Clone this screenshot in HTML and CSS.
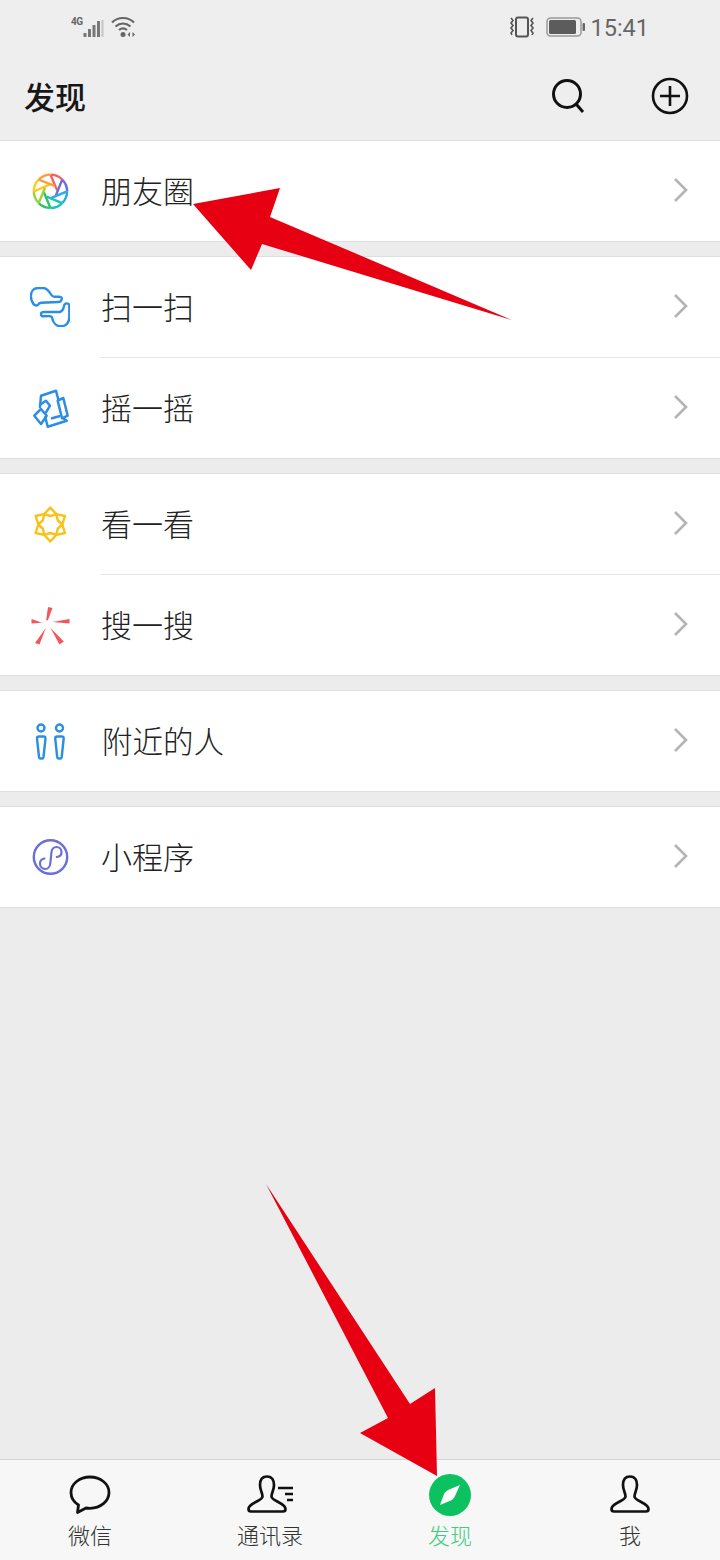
FILE: index.html
```html
<!DOCTYPE html>
<html lang="zh-CN">
<head>
<meta charset="utf-8">
<title>发现</title>
<link rel="stylesheet" href="styles.css">
</head>
<body>
<div class="app">
  <div class="status">
    <div class="status-left">
      <span class="net">4G</span>
      <svg class="signal" width="22" height="24" viewBox="0 0 22 24"><g fill="#777"><rect x="0.500" y="18" width="3" height="4"/><rect x="5" y="14" width="3" height="8"/><rect x="9.500" y="10" width="3" height="12"/><rect x="14" y="6" width="3" height="16"/></g><rect x="18.500" y="5" width="2" height="17" fill="#c4c4c4"/></svg>
      <svg class="wifi" width="26" height="24" viewBox="0 0 26 24"><g fill="none" stroke="#666" stroke-width="2.200"><path d="M1 7.500C7 1.500 17 1.500 23 7.500"/><path d="M4.500 11.500C9 7.500 15 7.500 19.500 11.500"/><path d="M8 15C10.500 13 13.500 13 16 15"/></g><circle cx="12" cy="19.500" r="2.500" fill="#666"/><path d="M19 17v5l-2.500-2.500zM21.500 17v5l2.500-2.500z" fill="#666"/></svg>
    </div>
    <div class="status-right">
      <svg class="vib" width="28" height="24" viewBox="0 0 28 24"><rect x="8" y="2.500" width="12" height="19" rx="2" fill="none" stroke="#555" stroke-width="2"/><g fill="none" stroke="#555" stroke-width="1.600"><path d="M3 3l2 2.500-2 2.500 2 2.500-2 2.500 2 2.500-2 2.500 1 2"/><path d="M25 3l-2 2.500 2 2.500-2 2.500 2 2.500-2 2.500 2 2.500-1 2"/></g></svg>
      <svg class="batt" width="40" height="22" viewBox="0 0 40 22"><rect x="1" y="2" width="34" height="18" rx="3.500" fill="none" stroke="#999" stroke-width="1.500"/><rect x="3" y="4" width="27" height="14" rx="1.500" fill="#5c5c5c"/><rect x="36.500" y="7" width="2.500" height="8" rx="1" fill="#666"/></svg>
      <span class="time">15:41</span>
    </div>
  </div>

  <header class="topbar">
    <h1 class="title">发现</h1>
    <svg class="top-search" width="36" height="38" viewBox="0 0 36 38"><circle cx="16" cy="17" r="13.500" fill="none" stroke="#111" stroke-width="3"/><path d="M25.500 27.500L32 35" stroke="#111" stroke-width="3" fill="none"/></svg>
    <svg class="top-plus" width="38" height="38" viewBox="0 0 38 38"><circle cx="19" cy="19" r="17" fill="none" stroke="#111" stroke-width="2.600"/><path d="M19 9v20M9 19h20" stroke="#111" stroke-width="2.600" fill="none"/></svg>
  </header>

  <main class="list">
    <section class="group first">
      <div class="row">
        <svg class="icon" width="40" height="40" viewBox="0 0 40 40">
          <g fill="none" stroke-width="2.500" transform="translate(20.500 20.300) scale(.95) translate(-20 -20)">
            <g stroke="#f4645f"><path d="M20 2.500A17.500 17.500 0 0 1 32.400 7.600M20 2.500L27 19"/></g>
            <g stroke="#6f6be0" transform="rotate(45 20 20)"><path d="M20 2.500A17.500 17.500 0 0 1 32.400 7.600M20 2.500L27 19"/></g>
            <g stroke="#2ba8ee" transform="rotate(90 20 20)"><path d="M20 2.500A17.500 17.500 0 0 1 32.400 7.600M20 2.500L27 19"/></g>
            <g stroke="#18c3c0" transform="rotate(135 20 20)"><path d="M20 2.500A17.500 17.500 0 0 1 32.400 7.600M20 2.500L27 19"/></g>
            <g stroke="#2cc36b" transform="rotate(180 20 20)"><path d="M20 2.500A17.500 17.500 0 0 1 32.400 7.600M20 2.500L27 19"/></g>
            <g stroke="#9ed13a" transform="rotate(225 20 20)"><path d="M20 2.500A17.500 17.500 0 0 1 32.400 7.600M20 2.500L27 19"/></g>
            <g stroke="#f8cd20" transform="rotate(270 20 20)"><path d="M20 2.500A17.500 17.500 0 0 1 32.400 7.600M20 2.500L27 19"/></g>
            <g stroke="#f9a03c" transform="rotate(315 20 20)"><path d="M20 2.500A17.500 17.500 0 0 1 32.400 7.600M20 2.500L27 19"/></g>
          </g>
        </svg>
        <span class="label">朋友圈</span>
        <svg class="chev" width="16" height="26" viewBox="0 0 16 26"><path d="M2 2l11 11L2 24" fill="none" stroke="#b4b4b4" stroke-width="2.600"/></svg>
      </div>
    </section>

    <section class="group">
      <div class="row">
        <svg class="icon" width="40" height="40" viewBox="0 0 40 40"><g fill="none" stroke="#2a8ee6" stroke-width="2.400" stroke-linejoin="round" stroke-linecap="round"><path d="M3.500 17C1.500 14 .7 11 .9 8.500C1.200 4 4 1 8 1H13C17 1 19 4 21 7.500C22 9.300 23 9.700 24.500 9.700H28.500C31 9.700 32.500 10.500 31.500 12.800C31 14.300 30 15 28.500 15L11 15.700C9.500 15.800 8.500 16.800 7.800 18C7 19 4.500 18.500 3.500 17Z"/><path d="M13.300 29.300C10.500 29.300 10 25.500 13.300 25H29.500C32 24.500 33.500 22 34 19C34.500 15.500 39.300 15.500 39.300 19V30C39.300 35.500 36 39.300 31 39.300C26.500 39.300 23.300 36 22.500 32C22.200 30 21.500 29 19.500 29.100Z"/></g></svg>
        <span class="label">扫一扫</span>
        <svg class="chev" width="16" height="26" viewBox="0 0 16 26"><path d="M2 2l11 11L2 24" fill="none" stroke="#b4b4b4" stroke-width="2.600"/></svg>
      </div>
      <div class="divider"></div>
      <div class="row">
        <svg class="icon" width="40" height="40" viewBox="0 0 40 40"><g fill="none" stroke="#2a8ee6" stroke-width="2.500" stroke-linejoin="round" stroke-linecap="round"><path d="M10 19L11 7.700L26 2.700L28.300 11.500"/><path d="M27.700 12.700L33.300 10L37.700 27.700L32 30.300Z"/><path d="M33.500 30.500L36.700 32.700L17.700 38.700L15.300 29.300"/><path d="M4.300 27.700L11 21L16.700 27.700L11 36Z"/><path d="M11 16L16 12.700L20 17.700L16 24.300"/><path d="M22 30.300L29.300 28.300"/></g></svg>
        <span class="label">摇一摇</span>
        <svg class="chev" width="16" height="26" viewBox="0 0 16 26"><path d="M2 2l11 11L2 24" fill="none" stroke="#b4b4b4" stroke-width="2.600"/></svg>
      </div>
    </section>

    <section class="group">
      <div class="row">
        <svg class="icon" width="40" height="40" viewBox="-0.300 -0.500 40 40"><g fill="none" stroke="#f7c318" stroke-width="2.400" stroke-linejoin="round"><polygon points="20,3 26,9.600 34.700,11.500 32,20 34.700,28.500 26,30.400 20,37 14,30.400 5.300,28.500 8,20 5.300,11.500 14,9.600"/><polygon points="20,11.500 26,9.600 27.400,15.750 32,20 27.400,24.250 26,30.400 20,28.500 14,30.400 12.600,24.250 8,20 12.600,15.750 14,9.600"/></g></svg>
        <span class="label">看一看</span>
        <svg class="chev" width="16" height="26" viewBox="0 0 16 26"><path d="M2 2l11 11L2 24" fill="none" stroke="#b4b4b4" stroke-width="2.600"/></svg>
      </div>
      <div class="divider"></div>
      <div class="row">
        <svg class="icon" width="40" height="40" viewBox="0 -2 40 40"><g fill="#f4545a"><polygon points="18,0 22.500,1 17.800,13.500 16.200,13"/><polygon points="39.500,12 39.500,16.500 22.500,15"/><polygon points="1.500,12 1.500,16.500 12,15.800"/><polygon points="5,36 9.500,37.500 15.800,21"/><polygon points="29.500,37.500 33.800,34.500 20.500,21"/></g></svg>
        <span class="label">搜一搜</span>
        <svg class="chev" width="16" height="26" viewBox="0 0 16 26"><path d="M2 2l11 11L2 24" fill="none" stroke="#b4b4b4" stroke-width="2.600"/></svg>
      </div>
    </section>

    <section class="group">
      <div class="row">
        <svg class="icon" width="40" height="40" viewBox="0 0 40 40"><g fill="none" stroke="#2a8ee6" stroke-width="2.400" stroke-linejoin="round"><circle cx="11" cy="7" r="3.500"/><circle cx="29.500" cy="7" r="3.500"/><path d="M7 17.500Q7 15.500 9 15.500H13.500Q15.500 15.500 15.500 17.500L13.500 36Q13.300 37.500 12 37.500H10.500Q9.200 37.500 9 36Z"/><path d="M25.200 17.500Q25.200 15.500 27.200 15.500H31.700Q33.700 15.500 33.700 17.500L31.700 36Q31.500 37.500 30.200 37.500H28.700Q27.400 37.500 27.200 36Z"/></g></svg>
        <span class="label wide">附近的人</span>
        <svg class="chev" width="16" height="26" viewBox="0 0 16 26"><path d="M2 2l11 11L2 24" fill="none" stroke="#b4b4b4" stroke-width="2.600"/></svg>
      </div>
    </section>

    <section class="group">
      <div class="row">
        <svg class="icon" width="40" height="40" viewBox="0 0 40 40"><g fill="none" stroke="#6b6fdc"><circle cx="20.500" cy="20" r="16.700" stroke-width="2.400"/><path d="M14.500 21.500C11.500 22 10 24 10 26.500C10 30 12.500 32 15.200 32C18 32 20 29.500 20.300 26.500L21.500 15C21.800 12 24 10 26.500 10C29.500 10 31.500 12.500 31.500 15C31.500 17.800 29.500 19.800 26.800 20" stroke-width="2.200" stroke-linecap="round"/></g></svg>
        <span class="label">小程序</span>
        <svg class="chev" width="16" height="26" viewBox="0 0 16 26"><path d="M2 2l11 11L2 24" fill="none" stroke="#b4b4b4" stroke-width="2.600"/></svg>
      </div>
    </section>
  </main>

  <nav class="tabbar">
    <div class="tab">
      <svg class="tab-icon" width="44" height="42" viewBox="0 0 44 42"><path d="M22 3C11.500 3 3 9.800 3 18.500C3 24 6.500 28.500 10.500 31L9.500 38.500L18 34C19.500 34.200 21 34.300 22 34.300C32.500 34.300 41 27.300 41 18.500C41 9.800 32.500 3 22 3Z" fill="none" stroke="#111" stroke-width="2.800" stroke-linejoin="round"/></svg>
      <span class="tab-label">微信</span>
    </div>
    <div class="tab">
      <svg class="tab-icon" width="48" height="42" viewBox="0 0 48 42"><path d="M21 2.500C15.500 2.500 14 7 14 11C14 16 16.500 19 16.500 22.500C16.500 27 2.500 29 2.500 35Q2.500 37.500 5 37.500H37Q39.500 37.500 39.500 35C39.500 29 25.500 27 25.500 22.500C25.500 19 28 16 28 11C28 7 26.500 2.500 21 2.500Z" fill="none" stroke="#111" stroke-width="2.700" stroke-linejoin="round"/><path d="M32 14H47M39 20H47M41 26H47" stroke="#111" stroke-width="2.600" fill="none"/></svg>
      <span class="tab-label">通讯录</span>
    </div>
    <div class="tab active">
      <svg class="tab-icon" width="42" height="42" viewBox="0 0 42 42"><circle cx="21" cy="21" r="21" fill="#0bc160"/><path d="M31 11L19 16Q16 18 15 20L11 31L23 26Q25 24 26 22Z" fill="#fff"/></svg>
      <span class="tab-label">发现</span>
    </div>
    <div class="tab">
      <svg class="tab-icon" width="42" height="42" viewBox="0 0 42 42"><path d="M21 2.500C15.500 2.500 14 7 14 11C14 16 16.500 19 16.500 22.500C16.500 27 2.500 29 2.500 35Q2.500 37.500 5 37.500H37Q39.500 37.500 39.500 35C39.500 29 25.500 27 25.500 22.500C25.500 19 28 16 28 11C28 7 26.500 2.500 21 2.500Z" fill="none" stroke="#111" stroke-width="2.700" stroke-linejoin="round"/></svg>
      <span class="tab-label">我</span>
    </div>
  </nav>

  <svg class="arrows" width="720" height="1560" viewBox="0 0 720 1560"><polygon fill="#e60012" points="193,204 280,188 270,217 512,320 262,244 251,270"/><polygon fill="#e60012" points="437,1476 360,1433 388,1418 266,1184 410,1404 435,1388"/></svg>
</div>
</body>
</html>
```

FILE: styles.css
```css
* { box-sizing: border-box; }
html, body { margin: 0; padding: 0; }
body { font-family: "Noto Sans CJK SC", "Noto Sans", sans-serif; background: #ededed; }
.app { position: relative; width: 720px; height: 1560px; display: flex; flex-direction: column; background: #ececec; overflow: hidden; }

.status { height: 56px; flex: none; display: flex; justify-content: space-between; align-items: flex-start; background: #eeeeee; padding: 15px 71px 0 71px; }
.status-left, .status-right { display: flex; align-items: flex-start; }
.net { font-family: "Liberation Sans Narrow", "Roboto", sans-serif; font-size: 10px; font-weight: 700; color: #666; line-height: 12px; margin-top: 1px; width: 12px; letter-spacing: -0.5px; }
.signal { margin-right: 6px; }
.vib { margin-right: 10px; }
.batt { margin-right: 4px; margin-top: 1px; }
.time { font-family: Roboto, sans-serif; font-size: 23.500px; line-height: 26px; color: #666; }

.topbar { height: 84px; flex: none; display: flex; align-items: center; background: #eeeeee; padding: 0 31px 4px 24px; }
.title { flex: 1; margin: 0; font-size: 31px; line-height: 40px; font-weight: 500; color: #171717; }
.top-search { margin-right: 64px; }

.list { flex: 1; }
.group { background: #fff; border-top: 1px solid #dedede; border-bottom: 1px solid #dedede; margin-top: 14px; }
.group.first { margin-top: 0; }
.row { height: 100px; display: flex; align-items: center; padding: 0 31px 0 30px; }
.icon { flex: none; margin-right: 31px; }
.label { flex: 1; font-size: 31px; font-weight: 300; line-height: 40px; color: #222; margin-bottom: 2px; }
.label.wide { padding-left: 1px; font-size: 30.500px; }
.chev { flex: none; margin-bottom: 2px; }
.divider { height: 1px; margin-left: 101px; background: #e4e4e4; }

.tabbar { height: 101px; flex: none; display: grid; grid-template-columns: repeat(4, 180px); background: #f7f7f7; border-top: 1px solid #d4d4d4; }
.tab { display: flex; flex-direction: column; align-items: center; padding-top: 14px; }
.tab-icon { display: block; flex: none; }
.tab-label { font-size: 22px; font-weight: 300; line-height: 30px; color: #333; margin-top: 3px; }
.tab.active .tab-label { color: #3ecb80; }

.arrows { position: absolute; left: 0; top: 0; pointer-events: none; }
```
